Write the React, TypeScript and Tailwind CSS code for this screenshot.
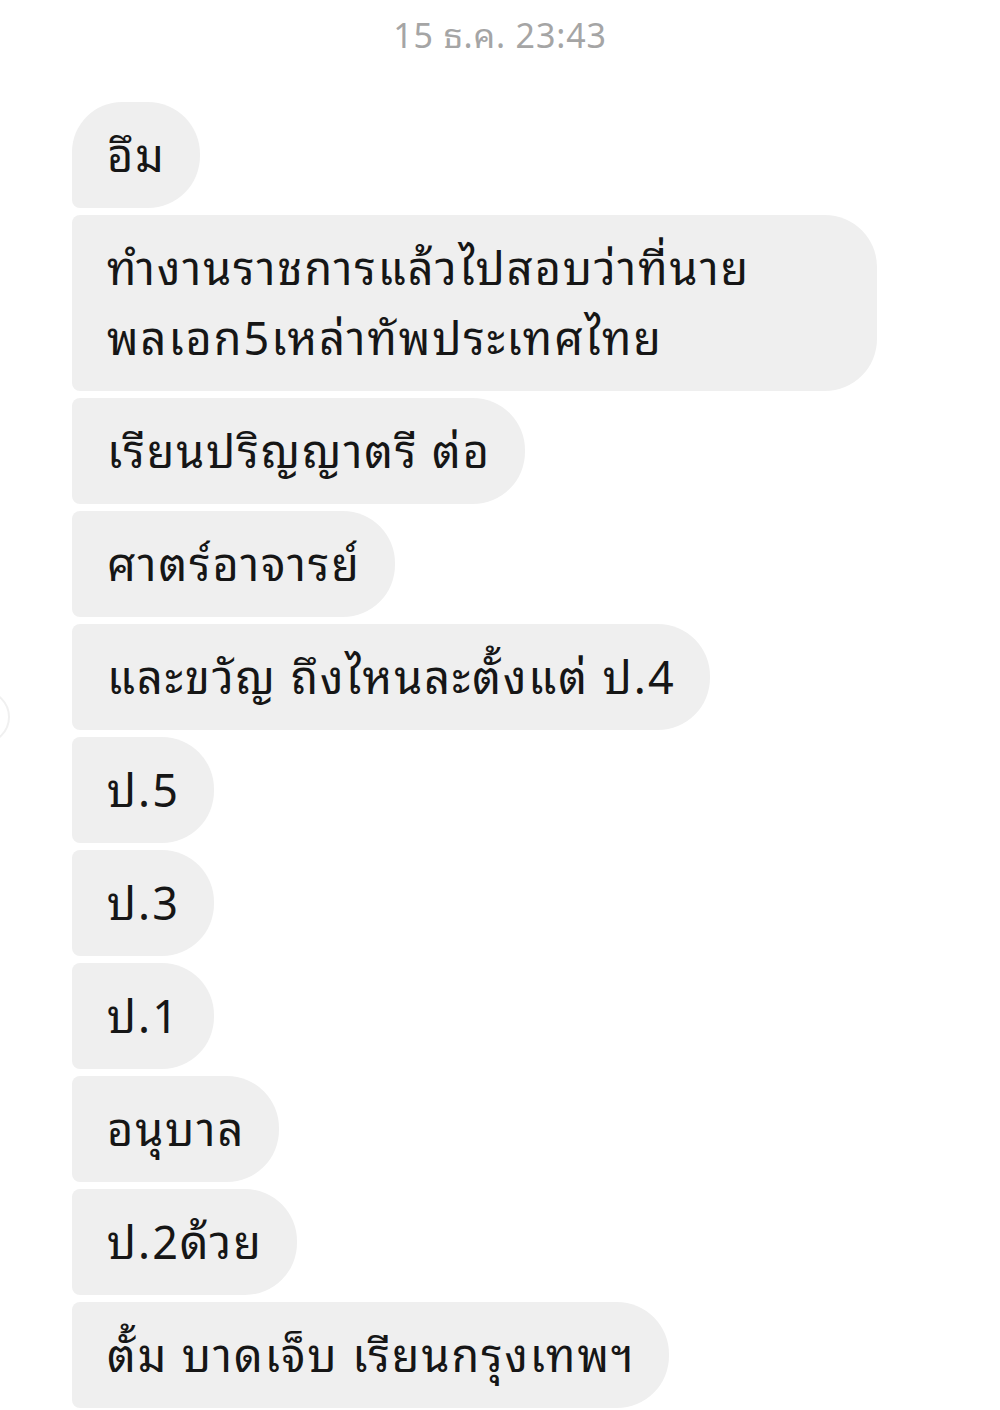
import React from "react";

const messages: string[][] = [
  ["อึม"],
  ["ทำงานราชการแล้วไปสอบว่าที่นาย", "พลเอก5เหล่าทัพประเทศไทย"],
  ["เรียนปริญญาตรี ต่อ"],
  ["ศาตร์อาจารย์"],
  ["และขวัญ ถึงไหนละตั้งแต่ ป.4"],
  ["ป.5"],
  ["ป.3"],
  ["ป.1"],
  ["อนุบาล"],
  ["ป.2ด้วย"],
  ["ตั้ม บาดเจ็บ เรียนกรุงเทพฯ"],
];

export default function App() {
  return (
    <div
      className="relative w-[1000px] h-[1410px] overflow-hidden bg-white"
      style={{ fontFamily: '"Noto Sans Thai Looped", "Loma", "Garuda", "Tlwg Typo", "Noto Sans", sans-serif' }}
    >
      {/* faint avatar edge on the left */}
      <div className="absolute left-[-44px] top-[690px] w-[54px] h-[54px] rounded-full border-2 border-[#f0f0f0]" />

      <div className="pt-[12px] text-center text-[34px] leading-[42px] text-[#a5a5a5] tracking-wide">
        15 ธ.ค. 23:43
      </div>

      <div className="mt-[48px] pl-[72px] flex flex-col items-start gap-[7px]">
        {messages.map((lines, i) => {
          const first = i === 0;
          return (
            <div
              key={i}
              className={
                (first ? "rounded-tl-[50px] rounded-bl-[8px]" : "rounded-l-[8px]") +
                " bg-[#efefef] text-[#161616] pl-[35px] pr-[34px] pt-[15px] pb-[21px] rounded-r-[52px]" +
                (lines.length > 1 ? " w-[805px]" : "")
              }
            >
              {lines.map((l, j) => (
                <div key={j} className="text-[45px] leading-[70px] tracking-[2px] whitespace-nowrap">
                  {l}
                </div>
              ))}
            </div>
          );
        })}
      </div>
    </div>
  );
}
